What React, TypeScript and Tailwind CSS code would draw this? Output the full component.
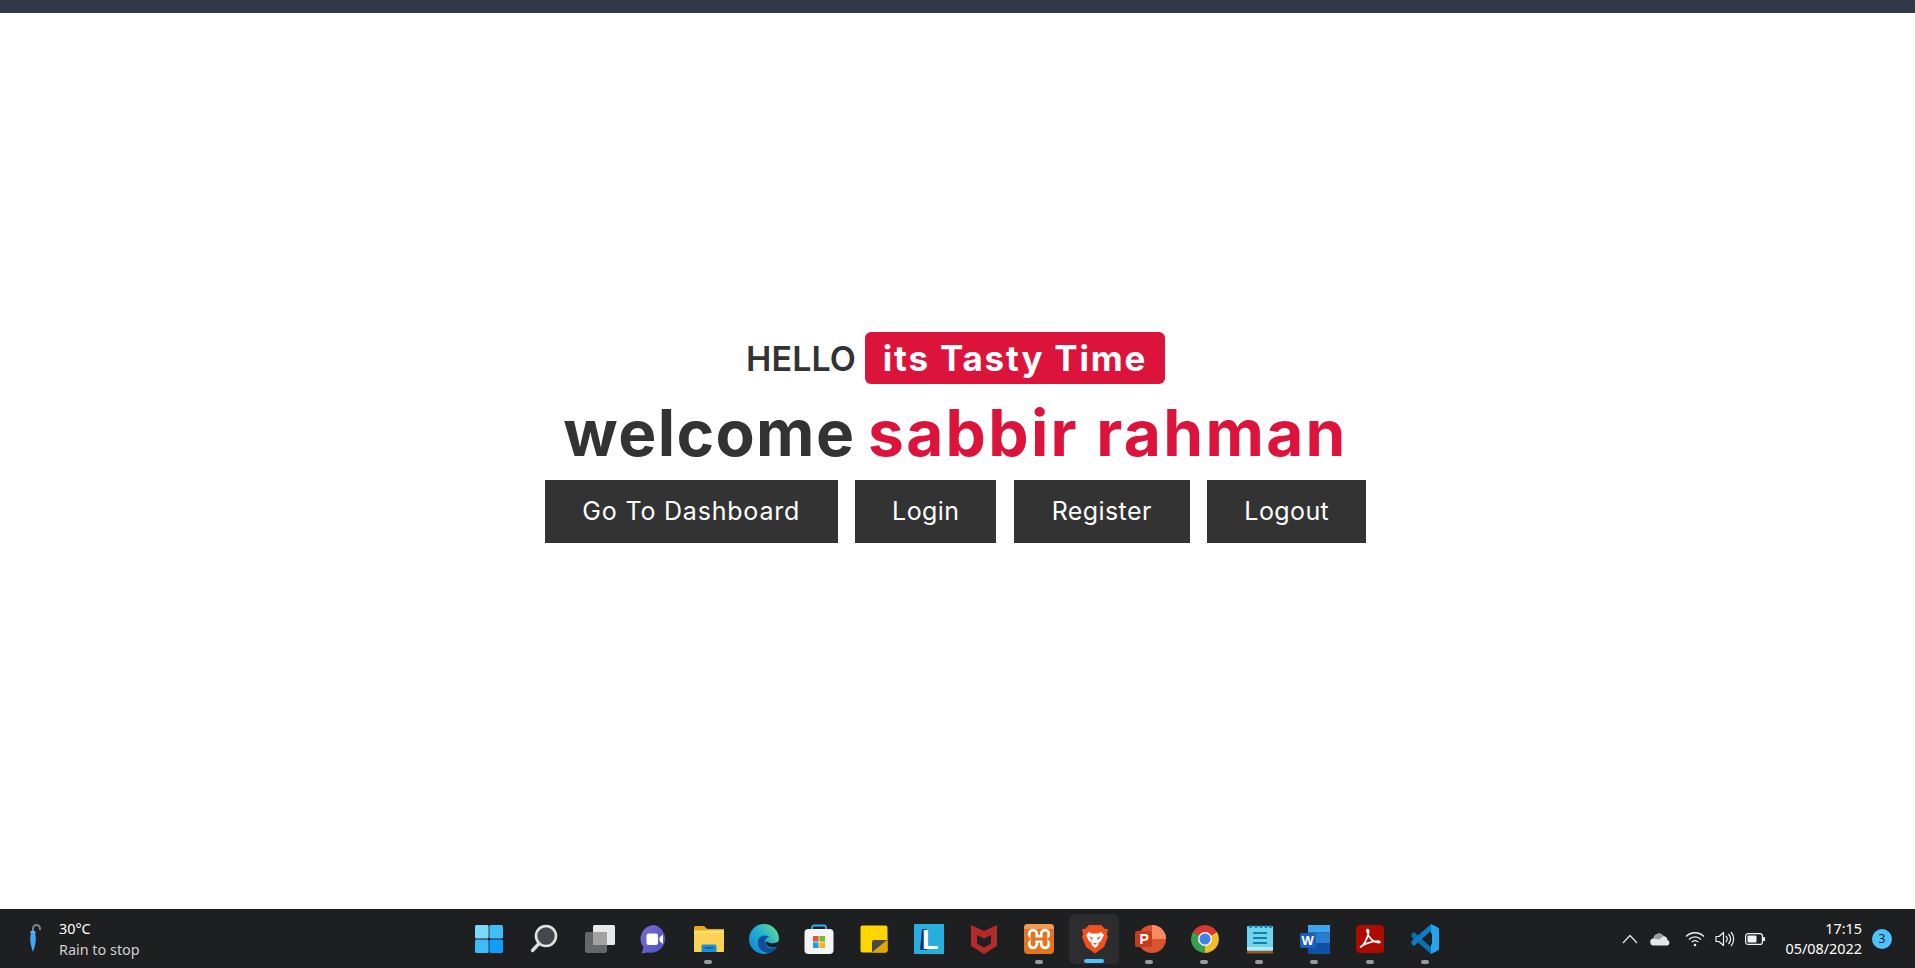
const Win = () => (
  <svg width="32" height="32" viewBox="0 0 32 32">
    <rect x="2" y="2" width="13.6" height="13.6" rx="1.5" fill="#7cd8fb" />
    <rect x="16.4" y="2" width="13.6" height="13.6" rx="1.5" fill="#41bdf8" />
    <rect x="2" y="16.4" width="13.6" height="13.6" rx="1.5" fill="#3fbcf8" />
    <rect x="16.4" y="16.4" width="13.6" height="13.6" rx="1.5" fill="#0f9ffa" />
  </svg>
);
const Search = () => (
  <svg width="32" height="32" viewBox="0 0 32 32">
    <circle cx="18" cy="13" r="10" fill="#47484b" stroke="#e3e3e3" strokeWidth="2.6" />
    <path d="M11 20.5 L4.5 27.5" stroke="#dcdcdc" strokeWidth="3.4" strokeLinecap="round" />
  </svg>
);
const TaskView = () => (
  <svg width="32" height="32" viewBox="0 0 32 32">
    <rect x="10" y="2" width="22" height="20" rx="1.5" fill="#e9e9e9" />
    <rect x="2" y="9" width="22" height="21" rx="2" fill="#6b6b6b" fillOpacity="0.95" />
    <rect x="10" y="9" width="14" height="13" fill="#a3a3a3" />
  </svg>
);
const Chat = () => (
  <svg width="32" height="32" viewBox="0 0 32 32">
    <defs>
      <linearGradient id="c1" x1="0" y1="0" x2="1" y2="1"><stop offset="0" stopColor="#7a6fd6" /><stop offset="1" stopColor="#4b4fc0" /></linearGradient>
    </defs>
    <path d="M16 2 A14 14 0 1 1 10 29.5 L3.5 30.5 L5.5 24.5 A14 14 0 0 1 16 2Z" fill="url(#c1)" />
    <rect x="8.5" y="10.5" width="11.5" height="11.5" rx="2.2" fill="#fff" />
    <path d="M21.5 14.5 L25 11.5 V21 L21.5 18Z" fill="#fff" />
  </svg>
);
const Folder = () => (
  <svg width="32" height="32" viewBox="0 0 32 32">
    <path d="M1 4.5 a1.5 1.5 0 0 1 1.5-1.5 H11 L14.5 6 H31 V12 H1Z" fill="#e8a80d" />
    <path d="M1 8 H31 V28 a1 1 0 0 1-1 1 H2 a1 1 0 0 1-1-1Z" fill="#fdd356" />
    <rect x="1" y="7.5" width="30" height="2" fill="#ffe28a" />
    <path d="M8.5 23 a1.5 1.5 0 0 1 1.5-1.5 H22 a1.5 1.5 0 0 1 1.5 1.5 V29 H8.5Z" fill="#1d8fd0" />
    <rect x="12" y="24" width="8" height="1.6" fill="#0c5e98" />
  </svg>
);
const Edge = () => (
  <svg width="32" height="32" viewBox="0 0 32 32">
    <defs>
      <linearGradient id="e1" x1="1" y1="0.1" x2="0" y2="0.9"><stop offset="0" stopColor="#6be28b" /><stop offset="0.45" stopColor="#24b2cf" /><stop offset="1" stopColor="#0f86d6" /></linearGradient>
    </defs>
    <circle cx="16" cy="16" r="15" fill="url(#e1)" />
    <path d="M32 17 C28 21 23 21 20 19 C18 17.5 17 19 18 21 C20 25 26 26 32 22Z" fill="#1e1f21" />
    <path d="M13 13.5 C8 16 9 26 16 29 C22 31.5 27 28 29 24 C25 26 20 25.5 18 22 C16 19 17 15 21 14 C19 12 16 12 13 13.5Z" fill="#0b4f9e" />
  </svg>
);
const Store = () => (
  <svg width="32" height="32" viewBox="0 0 32 32">
    <path d="M9 8 V4.5 a2 2 0 0 1 2-2 H21 a2 2 0 0 1 2 2 V8" fill="none" stroke="#2ab7ef" strokeWidth="1.8" />
    <rect x="1.5" y="6" width="29" height="25" rx="4" fill="#f4f4f4" />
    <rect x="10" y="13" width="5.6" height="5.6" fill="#e9552d" />
    <rect x="16.4" y="13" width="5.6" height="5.6" fill="#79b82f" />
    <rect x="10" y="19.4" width="5.6" height="5.6" fill="#1a9fe6" />
    <rect x="16.4" y="19.4" width="5.6" height="5.6" fill="#f8b511" />
  </svg>
);
const Sticky = () => (
  <svg width="32" height="32" viewBox="0 0 32 32">
    <rect x="2.5" y="2.5" width="27" height="27" rx="2" fill="#fdd500" />
    <path d="M14 29.5 V19 a2 2 0 0 1 2-2 H29.5Z" fill="#4b4a48" />
    <path d="M29.5 17 L14 29.5 H27.5 a2 2 0 0 0 2-2Z" fill="#dda70b" />
  </svg>
);
const LIcon = () => (
  <svg width="32" height="32" viewBox="0 0 32 32">
    <rect x="1" y="1" width="30" height="30" fill="#25afdc" />
    <path d="M13 6 H9 L7 27 H14Z" fill="#0c2d72" />
    <text x="9" y="26" fontFamily="'Liberation Sans', sans-serif" fontWeight="700" fontSize="27" fill="#fff">L</text>
  </svg>
);
const McAfee = () => (
  <svg width="32" height="32" viewBox="0 0 32 32">
    <path d="M3 2 L16 8 L29 2 V23 L16 31 L3 23Z" fill="#b32a2a" />
    <path d="M9 12 L16 15.5 L23 12 V20.5 L16 24.5 L9 20.5Z" fill="#1e1f21" />
  </svg>
);
const Xampp = () => (
  <svg width="32" height="32" viewBox="0 0 32 32">
    <rect x="1" y="1" width="30" height="30" rx="4" fill="#e4741e" />
    <path d="M1 5 a4 4 0 0 1 4-4 H27 a4 4 0 0 1 4 4 V6 H1Z" fill="#f09a55" />
    <g fill="#fff">
      <circle cx="10" cy="11" r="5.2" /><circle cx="22" cy="11" r="5.2" /><circle cx="10" cy="21" r="5.2" /><circle cx="22" cy="21" r="5.2" />
      <rect x="10" y="12" width="12" height="8" />
    </g>
    <g fill="#e4741e">
      <circle cx="10" cy="11" r="2.4" /><circle cx="22" cy="11" r="2.4" /><circle cx="10" cy="21" r="2.4" /><circle cx="22" cy="21" r="2.4" />
      <rect x="9" y="14.5" width="14" height="3" />
      <rect x="7.6" y="11" width="4.8" height="10" /><rect x="19.6" y="11" width="4.8" height="10" />
    </g>
  </svg>
);
const Brave = () => (
  <svg width="32" height="32" viewBox="0 0 32 32">
    <path d="M10 2 H22 L26 6 L29 6 L28 11 L29 14 L25 24 L16 30.5 L7 24 L3 14 L4 11 L3 6 L6 6Z" fill="#f3501f" />
    <path d="M10 9 L13 10.5 H19 L22 9 L25 12 L22 18 L19.5 20 L19 22.5 L16 25 L13 22.5 L12.5 20 L10 18 L7 12Z" fill="#fff" />
    <path d="M10 13 L14 15 L13 17 Z M22 13 L18 15 L19 17Z M14 20 H18 L16 22Z" fill="#f3501f" />
  </svg>
);
const Ppt = () => (
  <svg width="32" height="32" viewBox="0 0 32 32">
    <circle cx="18" cy="16" r="14" fill="#d9532f" />
    <path d="M18 2 A14 14 0 0 1 32 16 H18Z" fill="#f48b65" />
    <rect x="1" y="8" width="17" height="16" rx="2" fill="#c33c1c" />
    <text x="5.5" y="21" fontFamily="'Liberation Sans', sans-serif" fontWeight="700" fontSize="14" fill="#fff">P</text>
  </svg>
);
const Chrome = () => (
  <svg width="32" height="32" viewBox="0 0 32 32">
    <path d="M16 16 L3.9 9 A14 14 0 0 1 28.1 9Z" fill="#d8392c" />
    <path d="M16 16 L28.1 9 A14 14 0 0 1 16 30Z" fill="#f2bd25" />
    <path d="M16 16 L16 30 A14 14 0 0 1 3.9 9Z" fill="#3a9f4d" />
    <circle cx="16" cy="16" r="7" fill="#f3f3f3" />
    <circle cx="16" cy="16" r="5.5" fill="#3f80ec" />
  </svg>
);
const Notepad = () => (
  <svg width="32" height="32" viewBox="0 0 32 32">
    <rect x="3" y="26" width="26" height="4.5" rx="1" fill="#a5521b" />
    <rect x="3" y="3" width="26" height="25" rx="1" fill="#6fd4ee" />
    <rect x="3" y="24" width="26" height="3" fill="#b5e8f5" />
    <g fill="#127fa8">
      <circle cx="6.5" cy="3.5" r="1.6" /><circle cx="12" cy="3.5" r="1.6" /><circle cx="17" cy="3.5" r="1.6" /><circle cx="22" cy="3.5" r="1.6" /><circle cx="26.5" cy="3.5" r="1.6" />
      <rect x="9" y="9" width="14" height="2" /><rect x="9" y="14" width="14" height="2" /><rect x="9" y="19" width="14" height="2" />
    </g>
  </svg>
);
const Word = () => (
  <svg width="32" height="32" viewBox="0 0 32 32">
    <path d="M9 2 H31 V9.5 H9Z" fill="#41a5ee" />
    <rect x="9" y="9.5" width="22" height="11" fill="#2b7cd3" />
    <path d="M9 20.5 H31 V31 H9Z" fill="#124fa6" />
    <rect x="1" y="10" width="16" height="15" rx="1.5" fill="#1d5ec1" />
    <text x="2.6" y="22" fontFamily="'Liberation Sans', sans-serif" fontWeight="700" fontSize="13" fill="#fff">W</text>
  </svg>
);
const Acrobat = () => (
  <svg width="32" height="32" viewBox="0 0 32 32">
    <rect x="2" y="2" width="28" height="28" rx="4" fill="#ac0b00" />
    <path d="M6.5 24 C10 23 15 12 14.5 7.5 C14.2 6 12.8 6.5 13 8 C13.8 14 19 20 25.5 19.5 C26.5 19 25.5 18 24 18 C18 18 10 21 6.5 24Z" fill="none" stroke="#fff" strokeWidth="1.7" strokeLinejoin="round" />
  </svg>
);
const VSCode = () => (
  <svg width="32" height="32" viewBox="0 0 32 32">
    <path d="M2.5 11 L5 9 L23 25 V31 L21 30 L2.5 14Z" fill="#0d6fb4" />
    <path d="M2.5 21 L5 23 L23 7 V1 L21 2 L2.5 18Z" fill="#0e7bc6" />
    <path d="M22 1 L29 4.5 a2 2 0 0 1 1 1.5 V26 a2 2 0 0 1-1 1.5 L22 31 V22 L23 21 V11 L22 10Z" fill="#22a5ee" />
  </svg>
);

const Umbrella = () => (
  <svg width="14" height="30" viewBox="0 0 14 30">
    <path d="M5 7 V4.5 a3.5 3.5 0 0 1 7 0 V6" fill="none" stroke="#808080" strokeWidth="2" />
    <path d="M5 5.5 C9 11 8.5 18 5 28 C1.5 18 1 11 5 5.5Z" fill="#3fa9f5" />
    <rect x="2.5" y="7" width="5" height="2.5" fill="#4fb4f8" />
  </svg>
);
const Chevron = () => (
  <svg width="16" height="10" viewBox="0 0 16 10"><path d="M1 9 L8 1.5 L15 9" fill="none" stroke="#e8e8e8" strokeWidth="1.2" /></svg>
);
const Cloud = () => (
  <svg width="21" height="14" viewBox="0 0 21 14">
    <path d="M4 13.5 a3.5 3.5 0 0 1-.5-7 a5.5 5.5 0 0 1 10-2.5 a4.5 4.5 0 0 1 4 4 a2.9 2.9 0 0 1 0 5.5Z" fill="#e6e6e6" />
    <path d="M3.5 6.5 a5.5 5.5 0 0 1 10-2.5 l-4 3.5Z" fill="#9c9c9c" />
  </svg>
);
const Wifi = () => (
  <svg width="20" height="16" viewBox="0 0 20 16" fill="none" stroke="#f2f2f2" strokeWidth="1.3">
    <path d="M1 5.5 C6 .5 14 .5 19 5.5" /><path d="M4 8.5 C7.5 5 12.5 5 16 8.5" /><path d="M6.8 11 C8.7 9.3 11.3 9.3 13.2 11" />
    <circle cx="10" cy="14" r="1.3" fill="#f2f2f2" stroke="none" />
  </svg>
);
const Speaker = () => (
  <svg width="20" height="16" viewBox="0 0 20 16" fill="none" stroke="#f2f2f2" strokeWidth="1.2">
    <path d="M1 5.5 H4 L8.5 1.5 V14.5 L4 10.5 H1Z" strokeLinejoin="round" />
    <path d="M11 5 C12.5 6.8 12.5 9.2 11 11" /><path d="M13.5 3 C16 6 16 10 13.5 13" /><path d="M16 1 C19.5 5 19.5 11 16 15" />
  </svg>
);
const Battery = () => (
  <svg width="20" height="12" viewBox="0 0 20 12">
    <rect x=".6" y=".6" width="16.8" height="10.8" rx="2.5" fill="none" stroke="#f2f2f2" strokeWidth="1.2" />
    <rect x="2.5" y="2.5" width="9" height="7" rx="1" fill="#f2f2f2" />
    <rect x="18" y="4" width="2" height="4" rx=".6" fill="#f2f2f2" />
  </svg>
);

const apps = [
  { Icon: Win, pip: 0 },
  { Icon: Search, pip: 0 },
  { Icon: TaskView, pip: 0 },
  { Icon: Chat, pip: 0 },
  { Icon: Folder, pip: 1 },
  { Icon: Edge, pip: 0 },
  { Icon: Store, pip: 0 },
  { Icon: Sticky, pip: 0 },
  { Icon: LIcon, pip: 0 },
  { Icon: McAfee, pip: 0 },
  { Icon: Xampp, pip: 1 },
  { Icon: Brave, pip: 2 },
  { Icon: Ppt, pip: 1 },
  { Icon: Chrome, pip: 1 },
  { Icon: Notepad, pip: 1 },
  { Icon: Word, pip: 1 },
  { Icon: Acrobat, pip: 1 },
  { Icon: VSCode, pip: 1 },
];

const uiFont = "font-['Noto_Sans','Open_Sans',sans-serif]";

export default function App() {
  return (
    <div className="h-screen flex flex-col bg-white overflow-hidden font-['Inter',sans-serif]">
      <div className="h-[13px] bg-[#32374a]" />
      <main className="flex-1 flex flex-col items-center pt-[319px] pr-[4px]">
        <div className="flex items-center h-[52px]">
          <span className="w-[109px] text-[34px] font-semibold text-[#333] tracking-[0.1px] mr-[10px] whitespace-nowrap">HELLO</span>
          <span className="h-[52px] w-[300px] flex items-center justify-center rounded-md bg-[#dc143c] text-white text-[35px] font-bold tracking-[1.8px] whitespace-nowrap">its Tasty Time</span>
        </div>
        <h1 className="mt-[5px] h-[87px] leading-[87px] text-[64px] font-bold text-[#333] tracking-[1.4px] whitespace-nowrap">
          welcome <span className="ml-[-4px] text-[#dc143c] tracking-[2.3px]">sabbir rahman</span>
        </h1>
        <div className="mt-[4px] flex gap-[17.5px] text-white text-[25px]">
          <a className="w-[293px] h-[63px] flex items-center justify-center bg-[#333] tracking-[0.8px]">Go To Dashboard</a>
          <a className="w-[141px] h-[63px] flex items-center justify-center bg-[#333] tracking-[0.4px]">Login</a>
          <a className="w-[176px] h-[63px] flex items-center justify-center bg-[#333] tracking-[0.4px]">Register</a>
          <a className="w-[159px] h-[63px] flex items-center justify-center bg-[#333] tracking-[0.4px]">Logout</a>
        </div>
      </main>
      <footer className={`h-[59px] bg-[#1e1f21] flex items-center ${uiFont}`}>
        <div className="w-[461px] flex items-center pl-[28px] gap-[17px]">
          <Umbrella />
          <div className="flex flex-col text-[14.4px] leading-[21px]">
            <span className="text-white">30°C</span>
            <span className="text-[#cfcfcf]">Rain to stop</span>
          </div>
        </div>
        <div className="flex pt-[1px]">
          {apps.map(({ Icon, pip }, i) => (
            <div key={i} className="relative w-[55.1px] h-[50px] flex items-center justify-center">
              {pip === 2 && <div className="absolute left-[2px] top-0 w-[50px] h-[50px] rounded-md bg-[#2c2d2f]" />}
              <div className="relative flex"><Icon /></div>
              {pip === 1 && <div className="absolute left-[23px] top-[46px] w-[8px] h-[4px] rounded-full bg-[#9a9a9a]" />}
              {pip === 2 && <div className="absolute left-[17px] top-[45px] w-[20px] h-[4px] rounded-full bg-[#4cc2ff]" />}
            </div>
          ))}
        </div>
        <div className="flex-1 flex items-center justify-end pr-[23px]">
          <div className="flex items-center mr-[12px]"><Chevron /></div>
          <div className="flex items-center mr-[14px]"><Cloud /></div>
          <div className="flex items-center mr-[10px]"><Wifi /></div>
          <div className="flex items-center mr-[10px]"><Speaker /></div>
          <div className="flex items-center mr-[20px]"><Battery /></div>
          <div className="flex flex-col items-end text-[14.4px] leading-[20px] text-white mr-[10px]">
            <span>17:15</span>
            <span>05/08/2022</span>
          </div>
          <div className="w-[20px] h-[20px] rounded-full bg-[#4cc2ff] text-[#10202a] text-[12px] flex items-center justify-center">3</div>
        </div>
      </footer>
    </div>
  );
}
